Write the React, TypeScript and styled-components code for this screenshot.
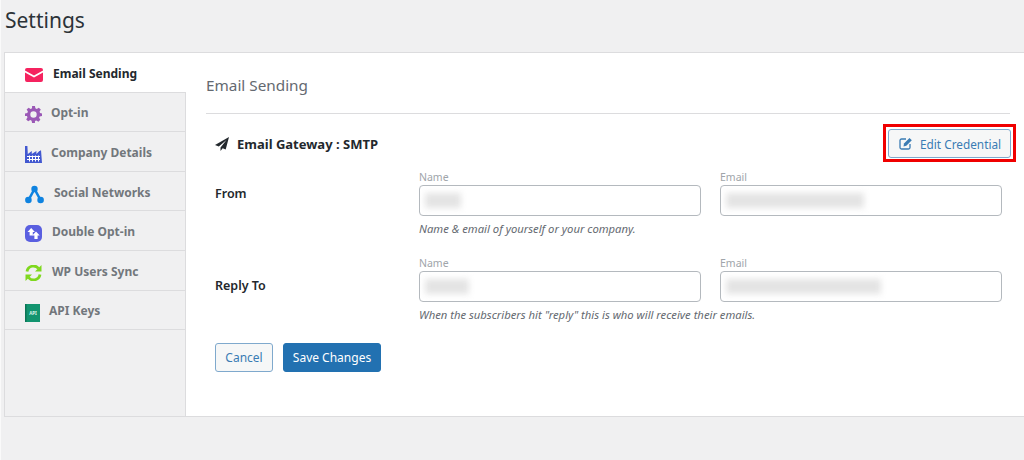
import styled, { createGlobalStyle } from "styled-components";
import { ReactNode } from "react";

const GlobalStyle = createGlobalStyle`
  html, body { margin: 0; padding: 0; }
  body {
    width: 1024px;
    height: 460px;
    overflow: hidden;
    background: #f0f0f1;
    font-family: "Noto Sans", "Open Sans", sans-serif;
    color: #2c3338;
  }
`;

const Page = styled.div`
  width: 1024px;
  height: 460px;
  box-sizing: border-box;
  padding: 0 0 0 4px;
  border-left: 1px solid #fafafa;
`;

const PageTitle = styled.h1`
  margin: 0;
  height: 52px;
  font-size: 21px;
  line-height: 41px;
  font-weight: 400;
  color: #2c3338;
`;

const Panel = styled.div`
  display: flex;
  height: 365px;
  background: #fff;
  border: 1px solid #dcdcde;
  border-right: none;
  box-sizing: border-box;
  margin-left: -1px;
`;

const Sidebar = styled.nav`
  width: 180px;
  flex: none;
  background: #f0f0f1;
  border-right: 1px solid #dcdcde;
`;

const Tab = styled.div<{ $active?: boolean; $gap: number }>`
  height: 39.6px;
  box-sizing: border-box;
  display: flex;
  align-items: center;
  padding: 2px 0 0 20px;
  gap: ${(p) => p.$gap}px;
  font-size: 12px;
  font-weight: 700;
  color: ${(p) => (p.$active ? "#23282d" : "#72777c")};
  background: ${(p) => (p.$active ? "#fff" : "#f0f0f1")};
  border-bottom: 1px solid #dcdcde;
  margin-right: ${(p) => (p.$active ? "-1px" : "0")};
`;

const IconBox = styled.span`
  width: 18px;
  height: 18px;
  margin-top: 4px;
  display: flex;
  align-items: center;
  justify-content: flex-start;
  flex: none;
`;

const Main = styled.main`
  flex: 1;
  min-width: 0;
  padding: 0 14px 0 20px;
`;

const SectionTitle = styled.h2`
  margin: 0;
  height: 61px;
  box-sizing: border-box;
  border-bottom: 1px solid #dcdcde;
  font-size: 15.3px;
  line-height: 64px;
  font-weight: 400;
  color: #646970;
`;

const GatewayRow = styled.div`
  display: flex;
  align-items: flex-start;
  justify-content: space-between;
  margin-top: 10px;
  padding-left: 9px;
`;

const GatewayTitle = styled.div`
  display: flex;
  align-items: center;
  gap: 8px;
  padding-top: 11px;
  font-size: 13px;
  font-weight: 700;
  color: #23282d;
`;

const EditOutline = styled.div`
  border: 3px solid #f00000;
  margin-right: -6px;
  padding: 2px 2px 1px;
  display: flex;
`;

const EditButton = styled.button`
  display: flex;
  align-items: center;
  gap: 7px;
  height: 29px;
  width: 123px;
  box-sizing: border-box;
  padding: 0 0 0 10px;
  background: #f6f7f7;
  border: 1px solid #7fa9cd;
  border-radius: 3px;
  color: #3a7cb4;
  font-family: inherit;
  font-size: 11.8px;
`;

const FormGrid = styled.div`
  display: grid;
  grid-template-columns: 185px 282px 282px;
  column-gap: 19px;
  margin-top: 8px;
  padding-left: 9px;
`;

const RowLabel = styled.div<{ $top: number }>`
  font-size: 12.5px;
  font-weight: 600;
  color: #23282d;
  padding-top: ${(p) => p.$top}px;
`;

const Field = styled.div`
  display: flex;
  flex-direction: column;
`;

const FieldCaption = styled.span`
  font-size: 10.5px;
  line-height: 15px;
  color: #a0a5aa;
`;

const InputBox = styled.div`
  height: 31px;
  box-sizing: border-box;
  background: #fff;
  border: 1px solid #b4b9be;
  border-radius: 4px;
  display: flex;
  align-items: center;
  padding-left: 5px;
  overflow: hidden;
`;

const Redacted = styled.span<{ $width: number }>`
  display: block;
  width: ${(p) => p.$width}px;
  height: 15px;
  background: #e4e4e4;
  filter: blur(3px);
`;

const Hint = styled.p`
  grid-column: 2 / 4;
  margin: 5px 0 0;
  font-size: 11.25px;
  line-height: 15px;
  font-style: italic;
  color: #646970;
`;

const FormSpacer = styled.div`
  grid-column: 1 / 4;
  height: 20px;
`;

const Actions = styled.div`
  display: flex;
  gap: 10px;
  margin-top: 21px;
  padding-left: 9px;
`;

const ActionButton = styled.button<{ $primary?: boolean }>`
  height: 29px;
  box-sizing: border-box;
  padding: 0;
  width: ${(p) => (p.$primary ? "98px" : "58px")};
  border-radius: 3px;
  border: 1px solid ${(p) => (p.$primary ? "#2271b1" : "#7fa9cd")};
  background: ${(p) => (p.$primary ? "#2271b1" : "#f6f7f7")};
  color: ${(p) => (p.$primary ? "#fff" : "#3a7cb4")};
  font-family: inherit;
  font-size: 12px;
`;

const MailIcon = () => (
  <svg width="18" height="14" viewBox="0 0 18 14">
    <path d="M2 0h14a2 2 0 0 1 2 2v.6L9 7.6 0 2.6V2a2 2 0 0 1 2-2z" fill="#f5235f" />
    <path d="M0 4.6l9 5 9-5V12a2 2 0 0 1-2 2H2a2 2 0 0 1-2-2z" fill="#f5235f" />
  </svg>
);

const GearIcon = () => (
  <svg width="17" height="17" viewBox="0 0 24 24">
    <path
      fillRule="evenodd"
      fill="#9b59b6"
      d="M10 0h4l.7 3.3 1.9.8L19.500 2.300l2.800 2.800-1.800 2.900.8 1.900L24 10.500v3.500l-3.300.7-.8 1.900 1.800 2.900-2.800 2.800-2.900-1.800-1.900.8L14 24h-4l-.7-3.300-1.900-.8-2.900 1.800-2.800-2.800 1.800-2.900-.8-1.900L0 14v-3.500l3.300-.7.8-1.900L2.300 5.100l2.800-2.800 2.900 1.800 1.900-.8zM12 7.500a4.500 4.500 0 1 0 0 9 4.500 4.500 0 0 0 0-9z"
    />
  </svg>
);

const FactoryIcon = () => (
  <svg width="17" height="17" viewBox="0 0 17 17">
    <path
      fill="#4258d0"
      d="M0 0h2.400l.4 8 4-3v3l4.600-3v3l3-3h.6l1-1L17 17H0z"
    />
    <g fill="#fff">
      <rect x="2" y="10" width="13" height="1" />
      <rect x="2" y="13" width="13" height="1" />
      <rect x="4" y="9.500" width="1" height="6" />
      <rect x="7" y="9.500" width="1" height="6" />
      <rect x="10" y="9.500" width="1" height="6" />
      <rect x="13" y="9.500" width="1" height="6" />
    </g>
  </svg>
);

const NetworkIcon = () => (
  <svg width="19" height="19" viewBox="0 0 19 19" style={{ flex: "none" }}>
    <path d="M9.500 4L3.500 15M9.500 4l6 11" stroke="#0f83e0" strokeWidth="2.600" fill="none" />
    <circle cx="9.500" cy="4" r="3.200" fill="#0f83e0" />
    <circle cx="3.400" cy="15" r="3.300" fill="#0f83e0" />
    <circle cx="15.600" cy="15" r="3.300" fill="#0f83e0" />
  </svg>
);

const DoubleOptIcon = () => (
  <svg width="17" height="17" viewBox="0 0 17 17">
    <rect width="17" height="17" rx="5" fill="#5a5fe0" />
    <path d="M6.200 3l3.700 4H7.800v3.500H4.600V7H2.500z" fill="#fff" />
    <path d="M11 6.500l3.700 4h-2.100V14H9.400v-3.500H7.300z" fill="#fff" />
  </svg>
);

const SyncIcon = () => (
  <svg width="17" height="16" viewBox="0 0 17 16">
    <path d="M2 6.500A6.500 6.500 0 0 1 13.500 3.500" stroke="#7fd81e" strokeWidth="2.800" fill="none" />
    <path d="M16.500 0v6.500h-6.500z" fill="#7fd81e" />
    <path d="M15 9.500A6.500 6.500 0 0 1 3.500 12.500" stroke="#7fd81e" strokeWidth="2.800" fill="none" />
    <path d="M.5 16V9.500H7z" fill="#7fd81e" />
  </svg>
);

const ApiKeyIcon = () => (
  <svg width="15" height="18" viewBox="0 0 15 18">
    <rect width="15" height="18" fill="#12946f" />
    <rect x="0" width="1.500" height="18" fill="#0b7556" />
    <text x="8" y="10.500" fontSize="4.500" fontWeight="700" textAnchor="middle" fill="#d6f2e8">API</text>
  </svg>
);

const PlaneIcon = () => (
  <svg width="14" height="14" viewBox="0 0 14 14">
    <path d="M14 0L0 8l3.800 1.600L11.500 3 5.500 10.500V14l2.200-2.700 3 1.300z" fill="#23282d" />
  </svg>
);

const EditIcon = () => (
  <svg width="14" height="13" viewBox="0 0 14 13" fill="none">
    <path d="M7 2H2.500A1.500 1.500 0 0 0 1 3.500v7A1.500 1.500 0 0 0 2.500 12h7a1.500 1.500 0 0 0 1.500-1.500V7" stroke="#3a7cb4" strokeWidth="1.300" />
    <path d="M5 6.500L10.500 1l2.300 2.300-5.500 5.500L4.500 9.500z" fill="#3a7cb4" />
  </svg>
);

const tabs: { label: string; icon: ReactNode; gap: number; active?: boolean }[] = [
  { label: "Email Sending", icon: <MailIcon />, gap: 10, active: true },
  { label: "Opt-in", icon: <GearIcon />, gap: 8 },
  { label: "Company Details", icon: <FactoryIcon />, gap: 8 },
  { label: "Social Networks", icon: <NetworkIcon />, gap: 11 },
  { label: "Double Opt-in", icon: <DoubleOptIcon />, gap: 9 },
  { label: "WP Users Sync", icon: <SyncIcon />, gap: 9 },
  { label: "API Keys", icon: <ApiKeyIcon />, gap: 6 },
];

const NameEmail = ({ name, email }: { name: number; email: number }) => (
  <>
    <Field>
      <FieldCaption>Name</FieldCaption>
      <InputBox>
        <Redacted $width={name} />
      </InputBox>
    </Field>
    <Field>
      <FieldCaption>Email</FieldCaption>
      <InputBox>
        <Redacted $width={email} />
      </InputBox>
    </Field>
  </>
);

export default function App() {
  return (
    <Page>
      <GlobalStyle />
      <PageTitle>Settings</PageTitle>
      <Panel>
        <Sidebar>
          {tabs.map((t) => (
            <Tab key={t.label} $active={t.active} $gap={t.gap}>
              <IconBox>{t.icon}</IconBox>
              {t.label}
            </Tab>
          ))}
        </Sidebar>
        <Main>
          <SectionTitle>Email Sending</SectionTitle>
          <GatewayRow>
            <GatewayTitle>
              <PlaneIcon />
              Email Gateway : SMTP
            </GatewayTitle>
            <EditOutline>
              <EditButton>
                <EditIcon />
                Edit Credential
              </EditButton>
            </EditOutline>
          </GatewayRow>
          <FormGrid>
            <RowLabel $top={15}>From</RowLabel>
            <NameEmail name={36} email={138} />
            <div />
            <Hint>Name &amp; email of yourself or your company.</Hint>
            <FormSpacer />
            <RowLabel $top={21}>Reply To</RowLabel>
            <NameEmail name={44} email={155} />
            <div />
            <Hint>When the subscribers hit "reply" this is who will receive their emails.</Hint>
          </FormGrid>
          <Actions>
            <ActionButton>Cancel</ActionButton>
            <ActionButton $primary>Save Changes</ActionButton>
          </Actions>
        </Main>
      </Panel>
    </Page>
  );
}
